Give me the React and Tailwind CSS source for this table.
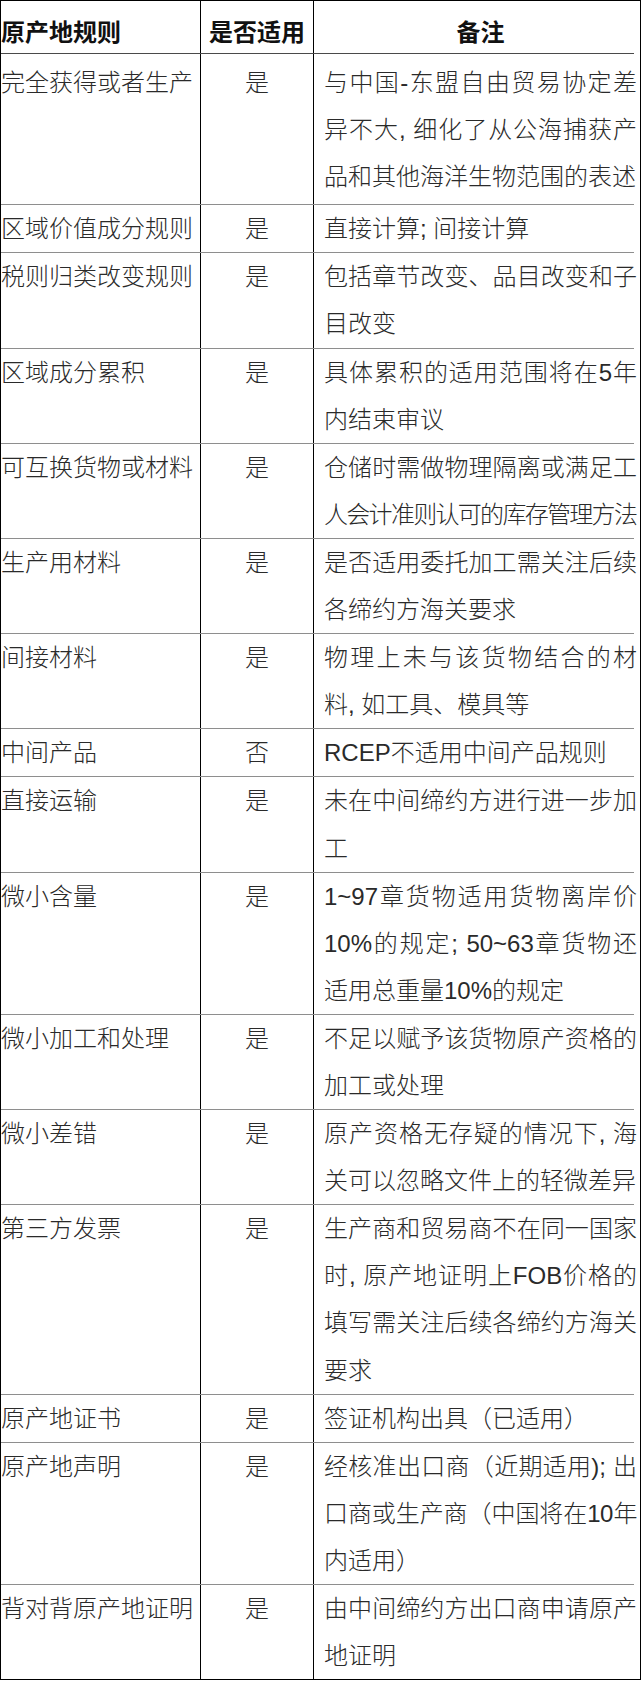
import React from "react";

const rows = [
  {
    rule: "完全获得或者生产",
    ok: "是",
    note: ["与中国-东盟自由贸易协定差", "异不大, 细化了从公海捕获产", "品和其他海洋生物范围的表述"],
    first: true,
  },
  { rule: "区域价值成分规则", ok: "是", note: ["直接计算; 间接计算"] },
  { rule: "税则归类改变规则", ok: "是", note: ["包括章节改变、品目改变和子", "目改变"] },
  { rule: "区域成分累积", ok: "是", note: ["具体累积的适用范围将在5年", "内结束审议"] },
  {
    rule: "可互换货物或材料",
    ok: "是",
    note: ["仓储时需做物理隔离或满足工", "人会计准则认可的库存管理方法"],
  },
  { rule: "生产用材料", ok: "是", note: ["是否适用委托加工需关注后续", "各缔约方海关要求"] },
  { rule: "间接材料", ok: "是", note: ["物理上未与该货物结合的材", "料, 如工具、模具等"] },
  { rule: "中间产品", ok: "否", note: ["RCEP不适用中间产品规则"] },
  { rule: "直接运输", ok: "是", note: ["未在中间缔约方进行进一步加", "工"] },
  {
    rule: "微小含量",
    ok: "是",
    note: ["1~97章货物适用货物离岸价", "10%的规定; 50~63章货物还", "适用总重量10%的规定"],
  },
  { rule: "微小加工和处理", ok: "是", note: ["不足以赋予该货物原产资格的", "加工或处理"] },
  { rule: "微小差错", ok: "是", note: ["原产资格无存疑的情况下, 海", "关可以忽略文件上的轻微差异"] },
  {
    rule: "第三方发票",
    ok: "是",
    note: [
      "生产商和贸易商不在同一国家",
      "时, 原产地证明上FOB价格的",
      "填写需关注后续各缔约方海关",
      "要求",
    ],
  },
  { rule: "原产地证书", ok: "是", note: ["签证机构出具（已适用）"] },
  {
    rule: "原产地声明",
    ok: "是",
    note: ["经核准出口商（近期适用); 出", "口商或生产商（中国将在10年", "内适用）"],
  },
  { rule: "背对背原产地证明", ok: "是", note: ["由中间缔约方出口商申请原产", "地证明"] },
];

// lines that are a little too long for the column get squeezed
const squeeze = {
  "人会计准则认可的库存管理方法": "tracking-[-1.7px]",
  "口商或生产商（中国将在10年": "tracking-[-0.4px]",
};

function NoteLines({ lines }) {
  return lines.map((line, i) => {
    const last = i === lines.length - 1;
    return (
      <div
        key={i}
        className={`${last ? "" : "text-justify [text-align-last:justify]"} ${squeeze[line] || ""}`}
      >
        {line}
      </div>
    );
  });
}

export default function App() {
  return (
    <div className="w-[641px] bg-white">
      <div className="border-l border-r border-t border-b border-black font-['Liberation_Sans','Noto_Sans_CJK_SC',sans-serif] text-[24px] text-[#2a2a2a]">
        {/* header */}
        <div className="grid grid-cols-[200px_113px_1fr] h-[52px] font-bold text-[#111]">
          <div className="border-r border-black pt-[12px] leading-[40px] whitespace-nowrap">原产地规则</div>
          <div className="border-r border-black pt-[12px] leading-[40px] text-center">是否适用</div>
          <div className="pl-[10px] pr-[3px] pt-[12px] leading-[40px] text-center">备注</div>
        </div>
        <div className="h-px bg-[#4a4a4a] mr-[6px]" />

        {rows.map((row, i) => {
          const last = i === rows.length - 1;
          const pad = row.first ? "pt-[5px] pb-[4px]" : "";
          return (
            <React.Fragment key={row.rule}>
              <div className="grid grid-cols-[200px_113px_1fr] leading-[47.1px] font-light">
                <div className={`border-r border-black whitespace-nowrap ${pad}`}>{row.rule}</div>
                <div className={`border-r border-black text-center ${pad}`}>{row.ok}</div>
                <div className={`pl-[10px] pr-[3px] ${pad}`}>
                  <NoteLines lines={row.note} />
                </div>
              </div>
              {!last && <div className="h-px bg-[#8e8e8e] mr-[6px]" />}
            </React.Fragment>
          );
        })}
      </div>
    </div>
  );
}
